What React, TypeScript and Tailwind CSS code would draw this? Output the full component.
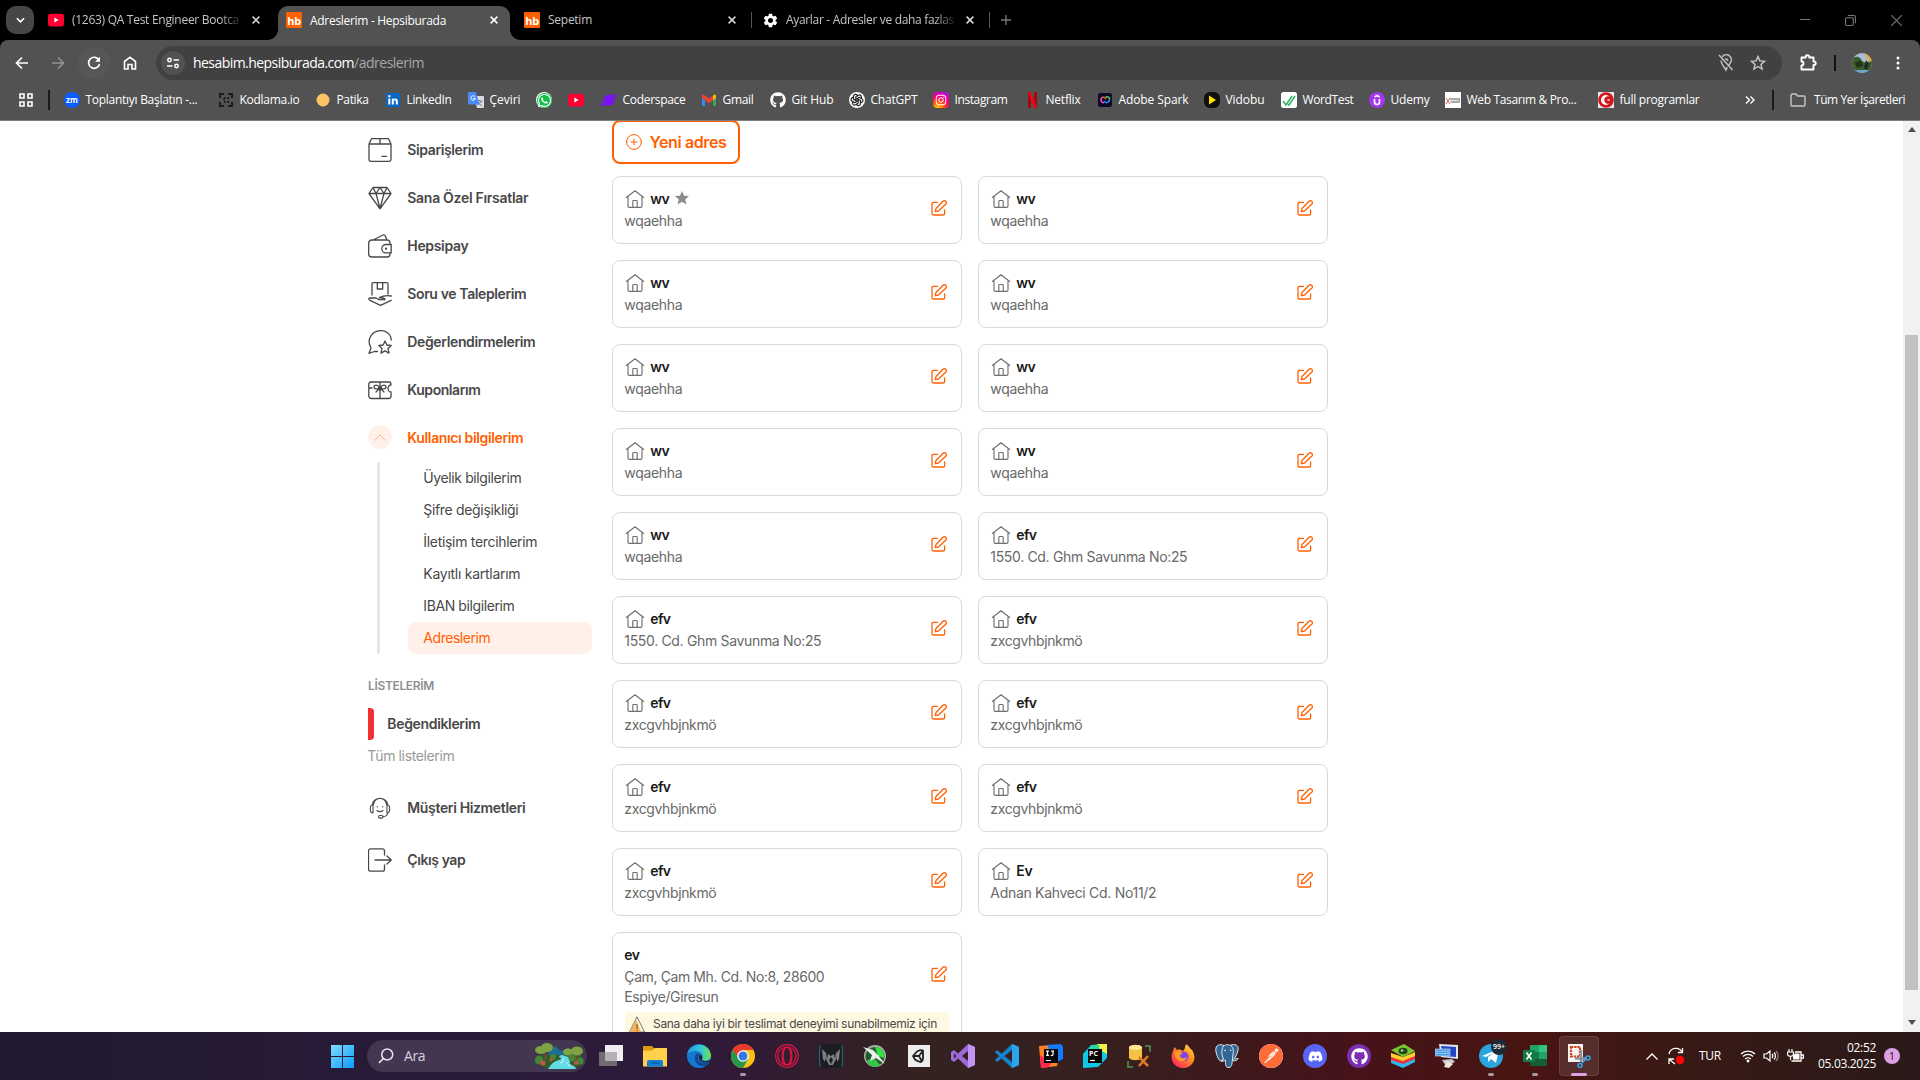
import React, { useLayoutEffect, useRef, useState, type ReactNode } from "react";
import { FaWhatsapp, FaGithub, FaInstagram, FaDiscord } from "react-icons/fa";
import { TbBrandOpenai } from "react-icons/tb";
import { SiPostman } from "react-icons/si";
import { MdSettings } from "react-icons/md";

/* One line of text whose letter spacing adapts so that it fills a given width. */
function Fit({ w, className = "", children }: { w: number; className?: string; children: string }) {
  const ref = useRef<HTMLSpanElement>(null);
  const [space, setSpace] = useState(0);
  useLayoutEffect(() => {
    if (ref.current) setSpace((w - ref.current.getBoundingClientRect().width) / children.length);
  }, [w, children]);
  return (
    <span ref={ref} className={`inline-block shrink-0 whitespace-nowrap ${className}`} style={{ letterSpacing: space }}>
      {children}
    </span>
  );
}

/* Page copy sits slightly above the optical centre of its row. */
function Copy({ w, children }: { w: number; children: string }) {
  return <Fit w={w} className="-mt-[2px] -ml-[0.7px]">{children}</Fit>;
}

const line = { fill: "none", stroke: "currentColor", strokeLinecap: "round", strokeLinejoin: "round" } as const;

/* ---------- browser chrome ---------- */

function YouTube({ className = "" }: { className?: string }) {
  return (
    <svg viewBox="0 0 16 16" className={`h-4 w-4 shrink-0 ${className}`}>
      <rect x="0" y="1.700" width="16" height="12.800" rx="2.800" fill="#ff0033" />
      <path d="M6.400 5.500v5l4.200-2.500z" fill="#fff" />
    </svg>
  );
}

function Hb() {
  return (
    <div className="flex h-4 w-4 shrink-0 items-center justify-center rounded-[1px] bg-[#ff6000] text-[11px] leading-none font-bold tracking-[-0.4px] text-white">
      hb
    </div>
  );
}

function Close({ className = "" }: { className?: string }) {
  return (
    <svg viewBox="0 0 8 8" className={`h-2 w-2 shrink-0 ${className}`}>
      <path d="M.6.6l6.8 6.800M7.400.6L.6 7.400" stroke="currentColor" strokeWidth="1.500" />
    </svg>
  );
}

function TabStrip() {
  return (
    <div className="flex h-10 items-center bg-black text-[12px] text-[#c4c4c4]">
      <div className="ml-[6px] flex h-7 w-7 items-center justify-center rounded-[10px] bg-[#474747]">
        <svg viewBox="0 0 10 6" className="h-[6px] w-[9px]"><path d="M1 1l4 4 4-4" stroke="#fff" strokeWidth="1.800" fill="none" /></svg>
      </div>
      <div className="ml-[14px] flex w-[230px] items-center">
        <YouTube />
        <div className="ml-2 w-[168px] overflow-hidden [mask-image:linear-gradient(to_right,black_148px,transparent_172px)]">
          <Fit w={167}>(1263) QA Test Engineer Bootca</Fit>
        </div>
        <Close className="ml-3 text-[#d8d8d8]" />
      </div>
      <div className="relative mt-[6px] flex h-[34px] w-[232px] items-center rounded-t-[10px] bg-[#525252] pb-[6px] pl-2 text-white">
        <div className="absolute bottom-0 -left-[10px] h-[10px] w-[10px] bg-[radial-gradient(circle_at_0_0,transparent_9.5px,#525252_10px)]" />
        <div className="absolute -right-[10px] bottom-0 h-[10px] w-[10px] bg-[radial-gradient(circle_at_100%_0,transparent_9.5px,#525252_10px)]" />
        <Hb />
        <div className="ml-2 w-[180px]"><Fit w={136} className="pt-px">Adreslerim - Hepsiburada</Fit></div>
        <Close />
      </div>
      <div className="ml-[14px] flex w-[227px] items-center">
        <Hb />
        <div className="ml-2 w-[180px]"><Fit w={44}>Sepetim</Fit></div>
        <Close className="text-[#d8d8d8]" />
      </div>
      <div className="h-4 w-px bg-[#555]" />
      <div className="ml-[10px] flex w-[227px] items-center">
        <MdSettings className="h-[17px] w-[17px] text-white" />
        <div className="ml-[7px] w-[168px] overflow-hidden [mask-image:linear-gradient(to_right,black_148px,transparent_172px)]">
          <Fit w={168}>Ayarlar - Adresler ve daha fazlas</Fit>
        </div>
        <Close className="ml-3 text-[#d8d8d8]" />
      </div>
      <div className="h-4 w-px bg-[#555]" />
      <svg viewBox="0 0 10 10" className="ml-[11px] h-[10px] w-[10px]"><path d="M5 0v10M0 5h10" stroke="#777" strokeWidth="1.400" /></svg>
      <div className="mr-[18px] ml-auto flex items-center gap-[35px] text-[#777]">
        <svg viewBox="0 0 10 10" className="h-[10px] w-[10px]"><path d="M0 4.500h10" stroke="currentColor" /></svg>
        <svg viewBox="0 0 10 10" className="h-[11px] w-[11px]"><g fill="none" stroke="currentColor"><rect x=".5" y="2.500" width="7" height="7" rx="1" /><path d="M2.500.5h5.500a1.500 1.500 0 011.500 1.500v5.500" /></g></svg>
        <svg viewBox="0 0 10 10" className="h-[11px] w-[11px]"><path d="M0 0l10 10M10 0L0 10" stroke="currentColor" /></svg>
      </div>
    </div>
  );
}

function Toolbar() {
  return (
    <div className="flex h-[46px] items-center rounded-t-lg bg-[#525252] text-white">
      <svg viewBox="0 0 14 14" className="ml-[15px] h-[14px] w-[14px]"><path d="M13 7H2M7 1.500L1.500 7 7 12.500" fill="none" stroke="#fff" strokeWidth="1.700" /></svg>
      <svg viewBox="0 0 14 14" className="ml-[22px] h-[14px] w-[14px]"><path d="M1 7h11M7 1.500L12.500 7 7 12.500" fill="none" stroke="#949494" strokeWidth="1.500" /></svg>
      <div className="ml-[13px] flex h-8 w-8 items-center justify-center rounded-full bg-[#575757]">
        <svg viewBox="0 0 14 14" className="h-[14px] w-[14px]"><path d="M12 4.200A5.500 5.500 0 1012.500 8" fill="none" stroke="#fff" strokeWidth="1.700" /><path d="M13 .8v5H8z" fill="#fff" /></svg>
      </div>
      <svg viewBox="0 0 14 14" className="ml-[13px] h-[14px] w-[14px]"><path d="M1.500 13V5.500L7 1.200l5.500 4.300V13H9V8.500H5V13z" fill="none" stroke="#fff" strokeWidth="1.600" /></svg>
      <div className="ml-[19px] flex h-[34px] w-[1626px] items-center rounded-full bg-[#414141] pl-[5px]">
        <div className="flex h-6 w-6 items-center justify-center rounded-full bg-[#525252]">
          <svg viewBox="0 0 14 14" className="h-[14px] w-[14px]"><g fill="none" stroke="#fff" strokeWidth="1.500"><circle cx="3.500" cy="4" r="1.700" /><path d="M7.500 4H13M1 10h5.500" /><circle cx="10.500" cy="10" r="1.700" /></g></svg>
        </div>
        <div className="-mt-px ml-2 flex text-[14px]">
          <Fit w={161}>hesabim.hepsiburada.com</Fit>
          <Fit w={70} className="text-[#a8a8a8]">/adreslerim</Fit>
        </div>
        <svg viewBox="0 0 16 18" className="ml-auto h-[18px] w-4 text-[#c0c0c0]"><g fill="none" stroke="currentColor" strokeWidth="1.500"><path d="M4.300 2.800A5 5 0 0112.700 8.200L11 11M9.300 13L8 16C5.500 12.500 3.200 9.500 3 6.500M1 1l13.500 15" /><path d="M7 5.500a1.500 1.500 0 012.500 1.500" /></g></svg>
        <svg viewBox="0 0 16 16" className="mr-4 ml-4 h-4 w-4 text-[#c8c8c8]"><path d="M8 1.500l1.900 4.400 4.700.4-3.600 3.100 1.100 4.600L8 11.500 3.900 14 5 9.400 1.400 6.300l4.700-.4z" fill="none" stroke="currentColor" strokeWidth="1.400" /></svg>
      </div>
      <svg viewBox="0 0 17 17" className="-mt-[2px] ml-[18px] h-[17px] w-[17px]"><path d="M1.500 3.500h4.200V3a1.800 1.800 0 013.600 0v.5h4.200v4h.5a1.700 1.700 0 010 3.400h-.5v4.600h-12v-4a2 2 0 000-4z" fill="none" stroke="#fff" strokeWidth="1.900" strokeLinejoin="round" /></svg>
      <div className="ml-[17px] h-4 w-[2px] bg-[#111]" />
      <svg viewBox="0 0 20 20" className="ml-[16px] h-5 w-5">
        <defs><clipPath id="avatar"><circle cx="10" cy="10" r="10" /></clipPath></defs>
        <g clipPath="url(#avatar)"><path d="M0 0h20v20H0z" fill="#a9bfd8" /><path d="M0 6c4-4 9-2 10 2l4 2 6-3v10H0z" fill="#3d5c2a" /><path d="M3 9l6-1 2 5-6 2z" fill="#20331b" /><path d="M12 0l5 9 3-1V0z" fill="#dfa94e" /><path d="M14 7l3 4-2 6-3-2z" fill="#222a2c" /><path d="M3 17h14v3H3z" fill="#69a8c9" /></g>
      </svg>
      <svg viewBox="0 0 4 16" className="ml-[24px] h-4 w-1"><g fill="#fff"><circle cx="2" cy="3" r="1.500" /><circle cx="2" cy="8" r="1.500" /><circle cx="2" cy="13" r="1.500" /></g></svg>
    </div>
  );
}

type Mark = { slot: number; w?: number; label?: string; icon: ReactNode };

const box = "h-4 w-4 shrink-0";
const marks: Mark[] = [
  { slot: 154, w: 112, label: "Toplantıyı Başlatın -...", icon: <div className={`${box} flex items-center justify-center rounded-full bg-[#0b5cff] text-[8px] font-bold text-white`}>zm</div> },
  { slot: 97, w: 60, label: "Kodlama.io", icon: <svg viewBox="0 0 16 16" className={box}><g fill="none" stroke="#1c1c1c" strokeWidth="2"><path d="M6 2H2v4M10 2h4v4M14 10v4h-4M6 14H2v-4" /><path d="M6 6h4v4H6z" strokeDasharray="1.500 2" /></g></svg> },
  { slot: 70, w: 32, label: "Patika", icon: <svg viewBox="0 0 16 16" className={box}><circle cx="8" cy="8" r="6.500" fill="#ffc266" /></svg> },
  { slot: 83, w: 45, label: "LinkedIn", icon: <svg viewBox="0 0 16 16" className={box}><rect x="1" y="1" width="14" height="14" rx="1" fill="#0a66c2" /><path d="M3.300 6.500h2v6h-2zM3.200 3.300h2.200v2H3.200zM6.800 6.500h2v.9c1-1.500 4-1.300 4 1.600v3.500h-2V9.500c0-1.800-2-1.600-2 0v3h-2z" fill="#fff" /></svg> },
  { slot: 68, w: 31, label: "Çeviri", icon: <svg viewBox="0 0 16 16" className={box}><path d="M6 4h9a1 1 0 011 1v10a1 1 0 01-1 1H9z" fill="#dadce0" /><path d="M8.500 9h6M11.500 8v1M13 9c-.5 2-2 3.500-3.500 4M10 10c.5 1.500 2 3 4 3.500" stroke="#607d8b" fill="none" strokeWidth=".9" /><path d="M1 0h7l3.500 12.500H1a1 1 0 01-1-1V1a1 1 0 011-1z" fill="#4c8bf5" /><path d="M7 4.800A2.200 2.200 0 107.300 6.500H5.300" stroke="#fff" fill="none" /></svg> },
  { slot: 32, icon: <span className="flex h-4 w-4 items-center justify-center rounded-full bg-white"><span className="flex h-[15px] w-[15px] items-center justify-center rounded-full bg-[#14bd4b]"><FaWhatsapp className="h-[15px] w-[15px] text-white" /></span></span> },
  { slot: 33, icon: <YouTube /> },
  { slot: 100, w: 63, label: "Coderspace", icon: <svg viewBox="0 0 16 16" className={box}><circle cx="8" cy="8" r="5.500" fill="#7b11f5" /><path d="M11 3.500c3-1.500 4.500-1 3.500 1S7 11 4 12.500s-4 .8-3-1l1.500-1.500" fill="none" stroke="#7b11f5" strokeWidth="1.500" /></svg> },
  { slot: 69, w: 31, label: "Gmail", icon: <svg viewBox="0 0 16 16" className={box}><path d="M1 4h3v10H2a1 1 0 01-1-1z" fill="#4285f4" /><path d="M12 4h3v9a1 1 0 01-1 1h-2z" fill="#34a853" /><path d="M12 4l1-1.200c1-.8 2 0 2 1.200v2l-3 2.300z" fill="#fbbc04" /><path d="M1 4c0-1.200 1-2 2-1.200l5 3.800 4-3v4.700l-4 3-4-3L1 6z" fill="#ea4335" /></svg> },
  { slot: 79, w: 42, label: "Git Hub", icon: <FaGithub className="h-4 w-4 text-white" /> },
  { slot: 84, w: 47, label: "ChatGPT", icon: <span className="flex h-4 w-4 items-center justify-center rounded-full bg-white"><TbBrandOpenai className="h-[14px] w-[14px] text-[#222]" /></span> },
  { slot: 91, w: 53, label: "Instagram", icon: <span className="flex h-4 w-4 items-center justify-center rounded-[4px] bg-[radial-gradient(circle_at_30%_100%,#ffd600,#ff5a00_30%,#ff0069_55%,#d300c5_80%,#7638fa)]"><FaInstagram className="h-3 w-3 text-white" /></span> },
  { slot: 73, w: 35, label: "Netflix", icon: <svg viewBox="0 0 16 16" className={box}><path d="M4 0h3v16H4zM10 0h3v16h-3z" fill="#a80710" /><path d="M4 0h3l6 16h-3z" fill="#e50914" /></svg> },
  { slot: 107, w: 70, label: "Adobe Spark", icon: <svg viewBox="0 0 16 16" className={box}><rect x="1" y="1" width="14" height="14" rx="2.500" fill="#0a0b25" /><g fill="none" strokeWidth="1.500"><path d="M7 10.800a3 3 0 01-1.500-5.600" stroke="#ff4dc4" /><path d="M5.500 5.200C7 4.700 8 6 9 7" stroke="#ff5030" /><path d="M8.500 5.300c2-1.500 4.500.2 4 2.600" stroke="#4cd964" /><path d="M12.500 8c-.6 3-4 3.600-5.500 1" stroke="#338fff" /></g></svg> },
  { slot: 77, w: 39, label: "Vidobu", icon: <svg viewBox="0 0 16 16" className={box}><rect width="16" height="16" rx="6" fill="#101010" /><path d="M5 3.500v9l7-4.500z" fill="#ffe600" /></svg> },
  { slot: 88, w: 51, label: "WordTest", icon: <svg viewBox="0 0 16 16" className={box}><rect width="16" height="16" rx="2.500" fill="#fff" /><path d="M2 9l3 4 6-9M7 12l1 1 6-9" stroke="#2eaf61" strokeWidth="1.500" fill="none" /></svg> },
  { slot: 76, w: 39, label: "Udemy", icon: <svg viewBox="0 0 16 16" className={box}><circle cx="8" cy="8" r="8" fill="#a435f0" /><path d="M5.500 7v3c0 3.300 5 3.300 5 0V7M5.500 5L8 3.500 10.500 5" stroke="#fff" strokeWidth="1.700" fill="none" /></svg> },
  { slot: 153, w: 110, label: "Web Tasarım & Pro...", icon: <svg viewBox="0 0 16 16" className={box}><path d="M0 0h16v16H0z" fill="#fff" /><path d="M1 6l4 6M5 6l-4 6" stroke="#d26262" /><path d="M5 6h10v5H6z" fill="#aaa" /><path d="M6.500 8.500h7" stroke="#fff" strokeDasharray="2 1" /></svg> },
  { slot: 147, w: 80, label: "full programlar", icon: <svg viewBox="0 0 16 16" className={box}><path d="M0 0h16v16H0z" fill="#e6e6e6" /><circle cx="8" cy="8" r="7.800" fill="#d3161c" /><path d="M11.500 4.500a5 5 0 100 7 3.800 3.800 0 110-7z" fill="#fff" /><path d="M8.500 8l3-1v2z" fill="#fff" /></svg> },
];

function Bookmarks() {
  return (
    <div className="flex h-[35px] items-center border-b border-[#7d7d7d] bg-[#525252] pb-[6px] text-[12px] text-white">
      <svg viewBox="0 0 14 14" className="ml-[19px] h-[14px] w-[14px]"><g fill="none" stroke="#fff" strokeWidth="1.600"><path d="M1 1h4v4H1zM9 1h4v4H9zM1 9h4v4H1zM9 9h4v4H9z" /></g></svg>
      <div className="mr-[14px] ml-[15px] h-5 w-[2px] bg-[#1a1a1a]" />
      {marks.map((m, i) => (
        <div key={i} className="flex shrink-0 items-center gap-[5.5px]" style={{ width: m.slot }}>
          {m.icon}
          {m.label && <Fit w={m.w ?? 0}>{m.label}</Fit>}
        </div>
      ))}
      <svg viewBox="0 0 10 8" className="h-2 w-[10px]"><path d="M1 .5L4.500 4 1 7.500M5.500.5L9 4 5.500 7.500" fill="none" stroke="#fff" strokeWidth="1.400" /></svg>
      <div className="ml-[17px] h-5 w-[2px] bg-[#1a1a1a]" />
      <svg viewBox="0 0 16 14" className="ml-[16px] h-[14px] w-4"><path d="M1 2.500C1 1.600 1.500 1 2.500 1H6l1.500 2H14a1 1 0 011 1v8a1 1 0 01-1 1H2a1 1 0 01-1-1z" fill="none" stroke="#c8c8c8" strokeWidth="1.400" /></svg>
      <div className="ml-2"><Fit w={91}>Tüm Yer İşaretleri</Fit></div>
    </div>
  );
}

/* ---------- account page ---------- */

function MenuIcon({ children }: { children: ReactNode }) {
  return <svg viewBox="0 0 24 24" className="h-6 w-6 shrink-0 text-[#484848]"><g {...line} strokeWidth="1.300">{children}</g></svg>;
}

const menu: { label: string; w: number; icon: ReactNode }[] = [
  { label: "Siparişlerim", w: 76, icon: <path d="M1 6h22v15.500a1.800 1.800 0 01-1.800 1.800H2.800A1.800 1.800 0 011 21.500zM1 6l2.500-5.300h17L23 6M12 .7V6M14 18.300h4.500" /> },
  { label: "Sana Özel Fırsatlar", w: 121, icon: <path d="M5 1.500h14L23 7.500 12 22.800 1 7.500zM1 7.500h22M5 1.500L8 7.500l4-6 4 6 3-6M8 7.500l4 15 4-15M10.500 21h3" /> },
  { label: "Hepsipay", w: 61, icon: <><path d="M22 10V9a3 3 0 00-3-3H4a3.300 3.300 0 00-3.300 3v11a3 3 0 003 3H19a3 3 0 003-3v-1M5 6l10-5c1-.4 2 0 2.300 1L19 6" /><path d="M23.200 10.500H18a4.200 4.200 0 000 8.400h5.200z" /><circle cx="18" cy="14.700" r=".5" fill="currentColor" /></> },
  { label: "Soru ve Taleplerim", w: 119, icon: <path d="M4 13V2c0-.8.500-1.300 1.300-1.300h13.400c.8 0 1.300.5 1.300 1.300v10M9.300.7V7h5.400V.7M17 17.500H10.500L8 16H1.500c-1 0-1 2 .5 2.300L12.500 23.300l10.700-5M10.500 17.500h6.500c0-2-2.500-1.800-5.500-2 4-2 7-2.500 11.700-1.500" /> },
  { label: "Değerlendirmelerim", w: 128, icon: <><path d="M9.500 21.500H6.300L1 23.300l2-5.300C1 14.500.5 10 2.500 6.500 7-1.300 18-1 22 5.500c.8 1.400 1.200 3 1.200 4.500" /><path d="M17 11l1.800 4 4.400.5-3.200 3 1 4.600-4-2.200-4 2.200 1-4.600-3.200-3 4.400-.5z" /></> },
  { label: "Kuponlarım", w: 73, icon: <><path d="M3 4h18.500c1.500 0 1.500 1 1.500 3-2 0-3 2-3 3.500S21 14 23 14v4a2.500 2.500 0 01-2.500 2.500H3.500A2.700 2.700 0 01.800 18V6.500A2.500 2.500 0 013 4zM1 10h3M12 4v16M12 10c-2-4-6-3.500-6-1s4 2 6 1zm0 0c2-4 6-3.500 6-1s-4 2-6 1zM12 10l-4 4M12 10l4 4" /><circle cx="12" cy="10.500" r="1.500" fill="currentColor" /></> },
];

const subMenu: { label: string; w: number }[] = [
  { label: "Üyelik bilgilerim", w: 98 },
  { label: "Şifre değişikliği", w: 95 },
  { label: "İletişim tercihlerim", w: 114 },
  { label: "Kayıtlı kartlarım", w: 97 },
  { label: "IBAN bilgilerim", w: 91 },
];

function Sidebar() {
  return (
    <div className="ml-[368px] flex w-[224px] shrink-0 flex-col pt-[5px] text-[14px] font-semibold text-[#484848]">
      {menu.map((m) => (
        <div key={m.label} className="flex h-12 items-center gap-4">
          <MenuIcon>{m.icon}</MenuIcon>
          <Copy w={m.w}>{m.label}</Copy>
        </div>
      ))}
      <div className="flex h-12 items-center gap-4 text-[#ff6000]">
        <div className="-mt-[2px] flex h-6 w-6 items-center justify-center rounded-full bg-[#fff1ea]">
          <svg viewBox="0 0 12 7" className="h-[7px] w-3"><path d="M.5 6.500L6 .8l5.500 5.700" fill="none" stroke="#ffb38a" /></svg>
        </div>
        <Copy w={116}>Kullanıcı bilgilerim</Copy>
      </div>
      <div className="flex pl-[9px] font-normal">
        <div className="h-48 w-[3px] rounded-sm bg-[#e5e5e5]" />
        <div className="ml-7 flex w-[184px] flex-col">
          {subMenu.map((s) => (
            <div key={s.label} className="flex h-8 items-center pl-4"><Copy w={s.w}>{s.label}</Copy></div>
          ))}
          <div className="flex h-8 items-center rounded-lg bg-[#fff1ea] pl-4 text-[#ff6000]"><Copy w={67}>Adreslerim</Copy></div>
        </div>
      </div>
      <div className="mt-[24px] h-4 text-[12px] leading-4 text-[#8f8f8f]"><Fit w={66}>LİSTELERİM</Fit></div>
      <div className="mt-[14px] flex h-8 items-center gap-[14px]">
        <div className="h-8 w-[6px] rounded-r-[4px] bg-[#f22f35]" />
        <Copy w={93}>Beğendiklerim</Copy>
      </div>
      <div className="flex h-8 items-center font-normal text-[#999]"><Copy w={87}>Tüm listelerim</Copy></div>
      <div className="mt-5 flex h-8 items-center gap-4">
        <svg viewBox="0 0 24 24" className="h-6 w-6 shrink-0 text-[#484848]">
          <g {...line} strokeWidth="1.100">
            <path d="M4.500 8.500C5 .3 19 .3 19.500 8.500M5.500 8.500C7 .5 17 .5 18.500 8.500M19.500 17.500c-.3 2-2 3-4.500 3.300" />
            <path d="M5 8.700c-2 0-2.700 1.500-2.700 4S3 17 5 17zM19 8.700c2 0 2.700 1.500 2.700 4S21 17 19 17z" />
            <path d="M9.300 10.500v.5M14.700 10.500v.5M9 14.500c1.500 1.500 4.500 1.500 6 0" />
            <rect x="10.500" y="19.500" width="4.500" height="2.600" rx="1.300" />
          </g>
        </svg>
        <Copy w={118}>Müşteri Hizmetleri</Copy>
      </div>
      <div className="mt-5 flex h-8 items-center gap-4">
        <MenuIcon><path d="M16.500 7V2.800A2 2 0 0014.500.8h-12a2 2 0 00-2 2v18.400a2 2 0 002 2h12a2 2 0 002-2V17M7 12h16.300M19 8l4.300 4-4.300 4" /></MenuIcon>
        <Copy w={58}>Çıkış yap</Copy>
      </div>
    </div>
  );
}

function House() {
  return (
    <svg viewBox="0 0 20 20" className="-mt-[2px] h-5 w-5 shrink-0 text-[#707070]"><g {...line} strokeWidth="1.150"><path d="M1.300 8.500L10 1.800l8.700 6.700M3 7.500V17c0 .8.500 1.300 1.300 1.300h11.400c.8 0 1.300-.5 1.300-1.300V7.500M7.800 18v-5.700c0-.5.300-.8.800-.8h2.800c.5 0 .8.300.8.800V18" /></g></svg>
  );
}

function Edit() {
  return (
    <svg viewBox="0 0 16 16" className="h-4 w-4 shrink-0 text-[#ff6000]"><g {...line} strokeWidth="1.300"><path d="M6.500 2.300H2.300C1.500 2.300 1 2.800 1 3.500v10.200c0 .8.500 1.300 1.300 1.300h10c.8 0 1.300-.5 1.300-1.300V10" /><path d="M4.300 11.700l.7-3.200 7-7.200c1.700-1.500 4.500.7 2.900 2.700l-7.400 7z" /></g></svg>
  );
}

const cards: [string, number, string, number][] = [
  ...Array.from({ length: 9 }, (): [string, number, string, number] => ["wv", 19, "wqaehha", 58]),
  ["efv", 20, "1550. Cd. Ghm Savunma No:25", 197],
  ["efv", 20, "1550. Cd. Ghm Savunma No:25", 197],
  ...Array.from({ length: 6 }, (): [string, number, string, number] => ["efv", 20, "zxcgvhbjnkmö", 92]),
  ["Ev", 16, "Adnan Kahveci Cd. No11/2", 166],
];

function Addresses() {
  return (
    <div className="ml-5 w-[716px] shrink-0 text-[14px]">
      <div className="flex h-11 w-32 items-center rounded-lg border-2 border-[#ff6000] pl-3 text-[16px] font-semibold text-[#ff6000]">
        <svg viewBox="0 0 16 16" className="mr-2 h-4 w-4"><g {...line}><circle cx="8" cy="8" r="7.400" /><path d="M8 5v6M5 8h6" /></g></svg>
        <Fit w={77} className="-ml-[0.5px]">Yeni adres</Fit>
      </div>
      <div className="mt-3 grid grid-cols-2 gap-4">
        {cards.map(([title, tw, text, w], i) => (
          <div key={i} className="flex h-[68px] items-center justify-between rounded-lg border border-[#d9d9d9] pr-[14px] pl-3">
            <div className="-mt-[1px] flex flex-col">
              <div className="flex h-6 items-center text-[#1a1a1a]">
                <House />
                <div className="ml-[6px] flex font-semibold"><Copy w={tw}>{title}</Copy></div>
                {i === 0 && <svg viewBox="0 0 12 12" className="-mt-1 ml-[6px] h-[14px] w-[14px]"><path d="M6 0l1.800 4 4.200.3-3.200 2.900 1 4.300L6 9.200l-3.800 2.300 1-4.300L0 4.300 4.200 4z" fill="#8c8c8c" /></svg>}
              </div>
              <div className="flex h-5 items-center text-[#696969]"><Copy w={w}>{text}</Copy></div>
            </div>
            <div className="-mt-[5px]"><Edit /></div>
          </div>
        ))}
        <div className="flex h-[150px] flex-col rounded-lg border border-[#d9d9d9] px-3 pt-[10px]">
          <div className="flex items-center justify-between pr-[2px]">
            <div className="text-[#696969]">
              <div className="flex h-6 items-center font-semibold text-[#1a1a1a]"><Copy w={15}>ev</Copy></div>
              <div className="flex h-5 items-center"><Copy w={200}>Çam, Çam Mh. Cd. No:8, 28600</Copy></div>
              <div className="flex h-5 items-center"><Copy w={94}>Espiye/Giresun</Copy></div>
            </div>
            <div className="-mt-[2px]"><Edit /></div>
          </div>
          <div className="mt-[5px] flex h-12 items-start rounded bg-[#fff8e1] pt-1 pl-1 text-[12px] leading-4 text-[#484848]">
            <svg viewBox="0 0 16 16" className="mr-2 h-4 w-4 shrink-0"><path d="M8 .8L15.500 16H.5z" fill="#fff8e1" stroke="#777" /><path d="M7 3l5 13H1z" fill="#f4b35b" /><path d="M8 8v5M8 14v1.200" stroke="#7a5320" /></svg>
            <Fit w={284}>Sana daha iyi bir teslimat deneyimi sunabilmemiz için</Fit>
          </div>
        </div>
      </div>
    </div>
  );
}

function Scrollbar() {
  return (
    <div className="ml-auto flex h-full w-[17px] shrink-0 flex-col items-center bg-[#f1f1f1]">
      <svg viewBox="0 0 8 5" className="mt-[6px] h-[5px] w-2"><path d="M0 5l4-5 4 5z" fill="#505050" /></svg>
      <div className="mt-[203px] h-[655px] w-[13px] bg-[#c1c1c1]" />
      <svg viewBox="0 0 8 5" className="mt-auto mb-[7px] h-[5px] w-2"><path d="M0 0l4 5 4-5z" fill="#505050" /></svg>
    </div>
  );
}

/* ---------- taskbar ---------- */

function App24({ children }: { children: ReactNode }) {
  return <svg viewBox="0 0 24 24" className="h-6 w-6">{children}</svg>;
}

const Dot = () => <div className="absolute bottom-[4px] left-[19px] h-[3px] w-[6px] rounded-full bg-[#a89aa5]" />;

const apps: { icon: ReactNode; state?: "open" | "active" }[] = [
  { icon: <App24><path d="M0 8h18v14H0z" fill="#6f6b70" /><path d="M6 1h18v16H6z" fill="#eee" /><path d="M6 8h12v9H6z" fill="#b5b1b6" /></App24> },
  { icon: <App24><path d="M0 2h9l3 3h12v4H0z" fill="#dc9a0c" /><path d="M0 6.500h9L12 4h12v18.500H0z" fill="#ffd04a" /><path d="M4 22.500V18c0-1.500 1-2 2-2h12c1 0 2 .5 2 2v4.500z" fill="#1080d4" /><path d="M8 19h8" stroke="#0a5ca6" strokeWidth="1.500" /></App24> },
  { icon: <App24><defs><linearGradient id="edgeTop" x1="0" x2="1"><stop stopColor="#219be0" /><stop offset=".55" stopColor="#30c5da" /><stop offset="1" stopColor="#6be24c" /></linearGradient></defs><circle cx="12" cy="12" r="12" fill="#1679cf" /><path d="M.3 10C2-1 21-4 24 11c.3 5-5 7-9.300 5-1-1 1-1.500.8-4C15 7 6 5 .3 10z" fill="url(#edgeTop)" /><path d="M9 10c-3 5 0 13 8 12 2-.3 4-2 5-4-6 3-11 0-11-4 0-2 1-3 2.500-3.500C12 9.500 10 9.300 9 10z" fill="#0b4a94" /><path d="M13.500 10.500c-2 1.500-2 5 1 7 3 1.500 6 1 8 0l.8-1.500c-3 1.500-7 1.500-8.600 0 1-1.500 1.300-3.500-1.200-5.500z" fill="#2b1933" /></App24> },
  { state: "open", icon: <App24><circle cx="12" cy="12" r="12" fill="#fbc116" /><path d="M1.600 6A12 12 0 0122.400 6H12l-5 9z" fill="#e63b2e" /><path d="M1.600 6A12 12 0 0012 24l5.200-9-5.200-1-4 .5z" fill="#279847" /><circle cx="12" cy="12" r="5.800" fill="#fff" /><circle cx="12" cy="12" r="4.500" fill="#3577e5" /></App24> },
  { icon: <App24><g fill="none" stroke="#e21547" strokeWidth="1.200"><circle cx="12" cy="12" r="11.300" /><circle cx="12" cy="12" r="9" /><ellipse cx="12" cy="12" rx="5" ry="9" /><ellipse cx="12" cy="12" rx="3.800" ry="8.800" /></g></App24> },
  { icon: <App24><path d="M1 0h22l1 12-1 12H1L0 12z" fill="#1b1d20" /><path d="M1 1L.3 12 1 23M23 1l.7 11L23 23" stroke="#16757c" fill="none" /><path d="M3 5l4 4 1 6 1-5 3 2 3-2 1 5 1-6 4-4-1 10-2 3v-4l-2 3-2 4h-4l-2-4-2-3v4l-2-3z" fill="#7d8183" /><path d="M12 13l2 3-2 4-2-4z" fill="#1b1d20" /></App24> },
  { icon: <App24><circle cx="12" cy="12" r="11" fill="#a7aca8" /><circle cx="12" cy="12.500" r="9.500" fill="#235c2b" /><path d="M12 3a9 9 0 019 11l-6-2z" fill="#31e045" /><path d="M4 16a8 8 0 0013 5l-5-6z" fill="#32c748" /><path d="M0 3l10 3 5 5 7 9-9-6-6 3 2-6z" fill="#eceeec" /></App24> },
  { icon: <App24><path d="M1 1h22v22H1z" fill="#ededed" /><path d="M6 12l4-4.500c3-1.500 5-1.500 6-1v8c0 2-1 3-2 3.500-2 0-4-1-6-2.500zM6 12h6l4-5.500M12 12l3 5.500" fill="none" stroke="#222" strokeWidth="1.800" strokeLinejoin="round" /></App24> },
  { icon: <App24><path d="M17 0l7 3v18l-7 3L7 14.500 3 18 0 16V8l3-2 4 3.500zM17 7l-6 5 6 5zM3 9.500v5L5.500 12z" fill="#9b6ad6" fillRule="evenodd" /><path d="M17 0l7 3v18l-7 3z" fill="#c193f5" /></App24> },
  { icon: <App24><path d="M17 0l7 3v18l-7 3L1 9.300 0 8l2-2 15 12V6L2 18l-2-2 1-1z" fill="#1683d0" /><path d="M17 0l7 3v18l-7 3z" fill="#2ba4ee" /></App24> },
  { icon: <App24><path d="M0 2l12-1 9 8-3 13-16 2z" fill="#ff8125" /><path d="M8 1l14-1 2 3v12l-8 4z" fill="#147bff" /><path d="M1 11l11 8-2 4-8 1z" fill="#ff264f" /><path d="M5 5h14v14H5z" fill="#050505" /><path d="M7 7.200h3M8.500 7v4.500M7 11.300h3M12 7.200h3M14 7v3.500c0 1-1 1.300-2.300.8M7 16.500h5" stroke="#fff" strokeWidth="1.200" fill="none" /></App24> },
  { icon: <App24><path d="M8 1l16-1v14l-9 9-15 1V10z" fill="#10c7e8" /><path d="M14 0h10v10l-7-4z" fill="#edf348" /><path d="M9 1h8l-3 5-10 3z" fill="#2ad99a" /><path d="M5 5h14v14H5z" fill="#050505" /><text x="6" y="12" fontSize="7" fontWeight="700" fill="#fff">PC</text><path d="M7 16.500h5" stroke="#fff" strokeWidth="1.200" /></App24> },
  { icon: <App24><path d="M18 2h5v6M1 17v6h5" fill="none" stroke="#4b9c51" strokeWidth="1.500" /><path d="M2 3c2-3 11-3 13 0v11c-2 3-11 3-13 0z" fill="#f2c344" /><ellipse cx="8.500" cy="3.500" rx="6.500" ry="2.500" fill="#ffe795" /><path d="M12 13l9 9M21 12l-9 10" stroke="#df7a25" strokeWidth="2.500" /></App24> },
  { icon: <App24><defs><linearGradient id="fox" x1="1" y1="0" x2=".2" y2="1"><stop stopColor="#fff044" /><stop offset=".4" stopColor="#ff9a20" /><stop offset="1" stopColor="#ff2461" /></linearGradient></defs><path d="M15 0c4 3 4 5 6 6 7 12-3 18-9 18C4 24-1 17 1 10c.5-3 2-5 2.500-7L6 6c3-1 4 0 6 1 2-2 2-4 3-7z" fill="url(#fox)" /><circle cx="12.500" cy="12.500" r="5" fill="#8443e8" /><path d="M4 8c3-2 5 0 8 1-1 1-3 1-3 3 1 3 5 3 7 1-1 6-10 6-12-1z" fill="#ff9c22" /></App24> },
  { icon: <App24><g fill="#336791" stroke="#dfebf3" strokeWidth="1" strokeLinejoin="round"><path d="M8.500 1.300C5-.2.500 1 .800 6c.2 3.500 2.500 10 4.300 10.700 1.400.5 2.200-1 3.400-2.500z" /><path d="M15.500 1.200c4-1.500 8-.2 7.700 3.500-.2 3-1.700 6.500-3.700 9.800 1.200.5 2.600.2 3.700-.2-.5 1.700-2.700 2.700-5 2.500z" /><path d="M8.300 2.200C11 0 14.500.3 16.500 2.200c3 3.300 1.500 7.500 1 12.300-.4 4-.3 8.700-3.500 9-3.500.3-3.500-2.500-3.600-7.500-1.200 1.200-3.200 1.500-4.400 1 1.500-.7 2.500-1.300 2.500-2.500C6.500 12 6.300 5 8.300 2.200z" /></g><circle cx="10" cy="6.500" r=".8" fill="#fff" /><circle cx="15.700" cy="6.300" r=".7" fill="#fff" /></App24> },
  { icon: <span className="flex h-6 w-6 items-center justify-center rounded-full bg-white"><SiPostman className="h-6 w-6 text-[#ff6c37]" /></span> },
  { icon: <span className="flex h-6 w-6 items-center justify-center rounded-full bg-[#5865f2]"><FaDiscord className="h-[15px] w-[15px] text-white" /></span> },
  { icon: <span className="flex h-6 w-6 items-center justify-center rounded-full bg-[#7d2eb0]"><FaGithub className="h-[17px] w-[17px] text-white" /></span> },
  { icon: <App24><path d="M0 15l12 4 12-5v4l-12 6-12-5z" fill="#2db9ed" /><path d="M0 12l12 4 12-5v4l-12 5-12-4z" fill="#ed3340" /><path d="M0 9l12 4 12-5v4l-12 5-12-4z" fill="#ffcf2e" /><path d="M0 6l13-6 11 7-12 6z" fill="#78c832" /><ellipse cx="12" cy="7" rx="4.500" ry="3.300" fill="#28441d" /><circle cx="11" cy="6.500" r="1.300" fill="#a5db7e" /></App24> },
  { icon: <App24><path d="M4 0l19 1v14l-17-2z" fill="#dfe4ed" /><path d="M6 2l15 1v10L8 12z" fill="#2345c4" /><path d="M0 5h15v7H0z" fill="#4b9be6" stroke="#dce9f6" strokeWidth=".6" /><path d="M1 7.300h13M1 9.500h13" stroke="#dce9f6" strokeWidth=".7" strokeDasharray="2 .7" /><path d="M7 16l10-1 3 3-9 4z" fill="#c7ccd4" /><path d="M12 17l6 3-4 4-5-1z" fill="#f1e4d8" /></App24> },
  { state: "open", icon: <div className="relative"><App24><circle cx="12" cy="12" r="12" fill="#2ba3dc" /><path d="M3 12L20 5l-3 14-5-4-3 3v-5l7-5-9 5z" fill="#fff" /></App24><div className="absolute -top-[5px] left-[12px] flex h-4 w-4 items-center justify-center rounded-full bg-[#202a34] text-[7px] font-semibold text-white">99+</div></div> },
  { state: "open", icon: <App24><path d="M7 1h17v21H7z" fill="#21a366" /><path d="M16 1h8v7h-8z" fill="#33c481" /><path d="M7 8h9v7H7z" fill="#107c41" /><path d="M7 15h17v7H7z" fill="#185c37" /><path d="M0 6h12v12H0z" fill="#107c41" /><path d="M3.500 8.500l5 7M8.500 8.500l-5 7" stroke="#fff" strokeWidth="1.600" /></App24> },
  { state: "active", icon: <App24><path d="M1 0h15v18H1z" fill="#f5f5f5" /><path d="M4 3h9v9.500H4z" fill="none" stroke="#d64018" strokeWidth="2.200" strokeDasharray="2.300 .9" /><path d="M14 6v12M8 14.500h11" stroke="#8c9299" strokeWidth="2.400" /><g fill="none" stroke="#35a5ea" strokeWidth="1.600"><circle cx="13" cy="21.500" r="2" /><circle cx="21" cy="14" r="2" /><path d="M15 19l4-4" /></g></App24> },
];

function Taskbar() {
  return (
    <div className="flex h-12 w-full shrink-0 items-center bg-[linear-gradient(90deg,#21192f_0%,#2a1b3a_25%,#301a38_38%,#33221f_48%,#36201f_57%,#451319_70%,#481512_80%,#391914_87%,#291a19_100%)] text-white">
      <svg viewBox="0 0 23 23" className="ml-[331px] h-[23px] w-[23px]"><defs><linearGradient id="win" x2="1" y2="1"><stop stopColor="#7edcff" /><stop offset="1" stopColor="#0c9bfa" /></linearGradient></defs><path d="M0 0h11v11H0zM12 0h11v11H12zM0 12h11v11H0zM12 12h11v11H12z" fill="url(#win)" /></svg>
      <div className="ml-[13px] flex h-8 w-[220px] items-center rounded-full bg-[#423650] pl-[11px]">
        <svg viewBox="0 0 16 16" className="h-4 w-4"><circle cx="9.200" cy="6.500" r="5.500" fill="none" stroke="#e8e4ea" strokeWidth="1.500" /><path d="M5.300 10.500L1 15" stroke="#e8e4ea" strokeWidth="1.700" /></svg>
        <div className="-mt-px ml-[10px] text-[14px] text-[#d8d2dc]"><Fit w={21}>Ara</Fit></div>
        <svg viewBox="0 0 50 26" className="mr-[3px] ml-auto h-[26px] w-[50px]">
          <path d="M14 10l7-7 6 5 7-3 6 8v6H12z" fill="#1f6c93" />
          <path d="M3 12h44l3 8-8 5H12L0 20z" fill="#2f5e2b" />
          <path d="M28 12c-8 2 4 3-3 5s-8 5-11 9h28c0-4-8-4-6-7s0-5-8-7z" fill="#63dbe5" />
          <path d="M30 15c-4 2 3 3-4 5M33 19c-2 2 4 3 3 5" stroke="#d7f8f8" fill="none" />
          <path d="M11 8l1 9M43 9l-1 9" stroke="#79492c" strokeWidth="2" />
          <g fill="#7da344"><ellipse cx="7" cy="7" rx="6" ry="4" /><ellipse cx="13" cy="4.500" rx="6" ry="4.500" /><ellipse cx="43" cy="8" rx="6" ry="4.500" /><ellipse cx="34" cy="9" rx="5" ry="3.500" /></g>
          <g fill="#488436"><circle cx="5" cy="17" r="4" /><circle cx="19" cy="14" r="3" /><circle cx="46" cy="18" r="3.500" /><circle cx="38" cy="15" r="3.500" /></g>
          <g fill="#cc4e4e"><circle cx="9" cy="20" r="2.500" /><circle cx="17" cy="17" r="1.500" /><circle cx="42" cy="20" r="2" /></g>
        </svg>
      </div>
      <div className="ml-[2px] flex">
        {apps.map((a, i) => (
          <div key={i} className="relative flex h-12 w-11 items-center justify-center">
            {a.state === "active" && <div className="absolute inset-x-[2px] inset-y-1 rounded border border-white/10 bg-white/10" />}
            <div className="relative">{a.icon}</div>
            {a.state === "open" && <Dot />}
            {a.state === "active" && <div className="absolute bottom-[4px] left-[14px] h-[3px] w-4 rounded-full bg-[#dda0e6]" />}
          </div>
        ))}
      </div>
      <svg viewBox="0 0 12 7" className="ml-[45px] h-[7px] w-3"><path d="M.5 6.500L6 1l5.500 5.500" stroke="#fff" strokeWidth="1.300" fill="none" /></svg>
      <svg viewBox="0 0 18 18" className="ml-[9px] h-[18px] w-[18px]"><path d="M2 7A7 7 0 0115 5M15.500 1v4.500H11M2 17v-5h5M2.500 12.500L8 17" stroke="#fff" strokeWidth="1.300" fill="none" /><circle cx="13" cy="13" r="4.300" fill="#ff0606" /></svg>
      <div className="ml-[14px] text-[12px]"><Fit w={22}>TUR</Fit></div>
      <svg viewBox="0 0 16 14" className="ml-[19px] h-[14px] w-4"><g fill="none" stroke="#fff" strokeWidth="1.300"><path d="M1 5a10 10 0 0114 0M3 7.500a7 7 0 0110 0M5.200 10a4 4 0 015.600 0" /><circle cx="8" cy="12" r=".8" fill="#fff" /></g></svg>
      <svg viewBox="0 0 16 14" className="ml-[7px] h-[14px] w-4"><g fill="none" stroke="#fff" strokeWidth="1.200"><path d="M1 5h2.500L7 2v10L3.500 9H1zM9 5a3 3 0 010 4M11 3.500a5 5 0 010 7" /><path d="M13 2a7 7 0 010 10" stroke="#998584" /></g></svg>
      <svg viewBox="0 0 17 14" className="ml-[8px] h-[14px] w-[17px]"><path d="M2 0v3M5 0v3M.5 3h6v2c0 3-6 3-6 0zM3.500 7v4" stroke="#fff" strokeWidth="1.200" fill="none" /><path d="M8 3h6v9H4.500M14 6h2.500v3H14" stroke="#fff" strokeWidth="1.300" fill="none" /><path d="M6 7l2-2.500h4.500v6H6z" fill="#fff" /></svg>
      <div className="ml-auto flex flex-col items-end text-[12px] leading-4">
        <Fit w={29}>02:52</Fit>
        <Fit w={58}>05.03.2025</Fit>
      </div>
      <div className="mr-5 ml-2 flex h-4 w-4 items-center justify-center rounded-full bg-[#dd9fe5] text-[11px] text-[#2a1a2a]">1</div>
    </div>
  );
}

export default function App() {
  return (
    <div className="flex h-[1080px] w-[1920px] flex-col overflow-hidden bg-white font-['Inter',sans-serif]">
      <div className="shrink-0 bg-black font-['Open_Sans',sans-serif]">
        <TabStrip />
        <Toolbar />
        <Bookmarks />
      </div>
      <div className="flex h-[911px] overflow-hidden bg-white">
        <Sidebar />
        <div className="-mt-px"><Addresses /></div>
        <Scrollbar />
      </div>
      <div className="shrink-0 font-['Open_Sans',sans-serif]"><Taskbar /></div>
    </div>
  );
}
